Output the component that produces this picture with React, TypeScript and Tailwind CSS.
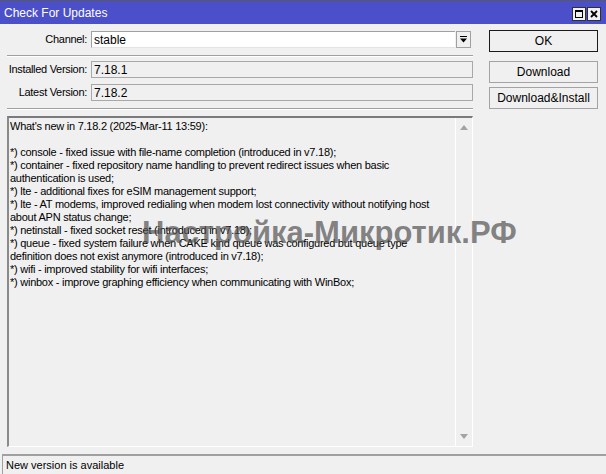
import React from "react";

const notes = [
  "What's new in 7.18.2 (2025-Mar-11 13:59):",
  "",
  "*) console - fixed issue with file-name completion (introduced in v7.18);",
  "*) container - fixed repository name handling to prevent redirect issues when basic",
  "authentication is used;",
  "*) lte - additional fixes for eSIM management support;",
  "*) lte - AT modems, improved redialing when modem lost connectivity without notifying host",
  "about APN status change;",
  "*) netinstall - fixed socket reset (introduced in v7.18);",
  "*) queue - fixed system failure when CAKE kind queue was configured but queue type",
  "definition does not exist anymore (introduced in v7.18);",
  "*) wifi - improved stability for wifi interfaces;",
  "*) winbox - improve graphing efficiency when communicating with WinBox;",
];

function Separator() {
  return <div className="h-[2px] border-t border-[#a0a0a0] border-b border-b-white" />;
}

function FieldRow({ label, children }: { label: string; children: React.ReactNode }) {
  return (
    <div className="flex items-center h-[17px]">
      <div className="w-[82px] text-right pr-[2px] shrink-0 whitespace-nowrap tracking-[-0.3px]">{label}</div>
      <div className="flex-1 flex h-full ml-[2px]">{children}</div>
    </div>
  );
}

function WinButton({ label, isDefault }: { label: string; isDefault?: boolean }) {
  return (
    <button
      className={
        "w-[109px] h-[22px] bg-[#f0f0f0] text-[12px] text-black flex items-center justify-center " +
        (isDefault ? "border border-[#1a1a1a]" : "border border-[#a3a3a3]")
      }
    >
      {label}
    </button>
  );
}

export default function App() {
  return (
    <div
      className="relative w-[606px] h-[474px] bg-[#f0f0f0] flex flex-col overflow-hidden text-[11px] text-black"
      style={{ fontFamily: '"Liberation Sans", Arial, sans-serif' }}
    >
      {/* title bar */}
      <div className="h-[24px] shrink-0 border-t border-[#5a5a5a] bg-[#4b4fc9] flex items-center pl-[4px] pr-[5px]">
        <span className="text-white text-[12px] flex-1">Check For Updates</span>
        <div className="flex gap-[1px] mt-[2px]">
          <div className="w-[14px] h-[14px] bg-[#f0f0f0] border border-[#303030] flex items-center justify-center">
            <div className="w-[8px] h-[8px] border border-black border-t-2" />
          </div>
          <div className="w-[14px] h-[14px] bg-[#f0f0f0] border border-[#303030] flex items-center justify-center">
            <svg width="8" height="8" viewBox="0 0 8 8">
              <path d="M1 1 L7 7 M7 1 L1 7" stroke="#000" strokeWidth="1.8" />
            </svg>
          </div>
        </div>
      </div>

      <div className="flex flex-1 min-h-0">
        {/* left column */}
        <div className="w-[466px] ml-[7px] flex flex-col">
          <div className="mt-[7px]">
            <FieldRow label="Channel:">
              <div className="flex-1 bg-white border border-[#a0a0a0] border-r-0 border-b-[#e3e3e3] flex items-center pl-[2px] text-[12px]">
                stable
              </div>
              <div className="w-[15px] ml-[1px] border border-[#a0a0a0] bg-[#f0f0f0] flex items-center justify-center">
                <svg width="9" height="9" viewBox="0 0 9 9">
                  <rect x="1" y="1" width="7" height="1" fill="#000" />
                  <path d="M1 3.5 H8 L4.5 7.5 Z" fill="#000" />
                </svg>
              </div>
              <div className="w-[2px]" />
            </FieldRow>
          </div>
          <div className="mt-[7px]">
            <Separator />
          </div>
          <div className="mt-[4px]">
            <FieldRow label="Installed Version:">
              <div className="flex-1 border border-[#a8a8a8] flex items-center pl-[2px] text-[12px]">7.18.1</div>
            </FieldRow>
          </div>
          <div className="mt-[6px]">
            <FieldRow label="Latest Version:">
              <div className="flex-1 border border-[#a8a8a8] flex items-center pl-[2px] text-[12px]">7.18.2</div>
            </FieldRow>
          </div>
          <div className="mt-[7px]">
            <Separator />
          </div>

          {/* release notes */}
          <div className="mt-[6px] h-[331px] flex border-t-2 border-t-[#7a7a7a] border-l-2 border-l-[#8a8a8a] border-r border-r-white border-b border-b-white">
            <div className="flex-1 pl-[1px] pt-[2px] leading-[13px] tracking-[-0.25px]">
              {notes.map((line, i) => (
                <div key={i} className="h-[13px] whitespace-pre">
                  {line}
                </div>
              ))}
            </div>
            <div className="w-[17px] border-l border-white flex flex-col items-center justify-between py-[7px]">
              <svg width="8" height="5" viewBox="0 0 8 5">
                <path d="M0 5 L4 0 L8 5 Z" fill="#a3a3a3" />
              </svg>
              <svg width="8" height="5" viewBox="0 0 8 5">
                <path d="M0 0 L8 0 L4 5 Z" fill="#a3a3a3" />
              </svg>
            </div>
          </div>
        </div>

        {/* right column */}
        <div className="ml-[16px] flex flex-col pt-[6px]">
          <WinButton label="OK" isDefault />
          <div className="h-[9px]" />
          <WinButton label="Download" />
          <div className="h-[4px]" />
          <WinButton label="Download&Install" />
        </div>
      </div>

      {/* status bar */}
      <div className="h-[20px] mt-[7px] shrink-0 ml-[2px] border-t-2 border-t-[#a0a0a0] border-l border-l-[#a0a0a0] flex items-center pl-[3px] text-[11px]">
        New version is available
      </div>

      {/* watermark */}
      <div className="absolute left-[142px] top-[210px] text-[31px] font-bold text-[#505050]/70 pointer-events-none whitespace-nowrap">
        Настройка-Микротик.РФ
      </div>
    </div>
  );
}
